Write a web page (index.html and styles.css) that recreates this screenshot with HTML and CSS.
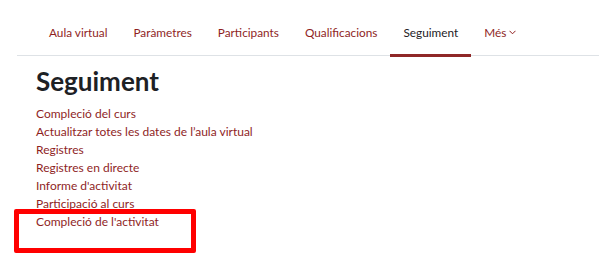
FILE: index.html
```html
<!DOCTYPE html>
<html lang="ca">
<head>
    <meta charset="UTF-8">
    <meta name="viewport" content="width=device-width, initial-scale=1.0">
    <title>Seguiment</title>
    <link rel="stylesheet" href="styles.css">
</head>
<body>
    <div class="page">
        <nav class="course-nav">
            <ul class="nav-list">
                <li><a href="#" class="nav-link">Aula virtual</a></li>
                <li><a href="#" class="nav-link">Paràmetres</a></li>
                <li><a href="#" class="nav-link">Participants</a></li>
                <li><a href="#" class="nav-link">Qualificacions</a></li>
                <li><a href="#" class="nav-link active">Seguiment</a></li>
                <li>
                    <a href="#" class="nav-link">Més
                        <svg class="caret" width="7" height="5" viewBox="0 0 7 5"><path d="M0.5 0.8 L3.5 3.8 L6.5 0.8" fill="none" stroke="currentColor" stroke-width="1"/></svg>
                    </a>
                </li>
            </ul>
        </nav>

        <main class="content">
            <h1>Seguiment</h1>
            <ul class="report-list">
                <li><a href="#">Compleció del curs</a></li>
                <li><a href="#">Actualitzar totes les dates de l’aula virtual</a></li>
                <li><a href="#">Registres</a></li>
                <li><a href="#">Registres en directe</a></li>
                <li><a href="#">Informe d'activitat</a></li>
                <li><a href="#">Participació al curs</a></li>
                <li class="marked"><a href="#">Compleció de l'activitat</a></li>
            </ul>
        </main>
    </div>
</body>
</html>
```

FILE: styles.css
```css
body {
    margin: 0;
    font-family: "Lato", "Noto Sans", sans-serif;
    font-size: 12px;
    color: #1d2125;
    background: #fff;
}
.page {
    padding-left: 17px;
    min-height: 276px;
}
.course-nav {
    border-bottom: 1px solid #dee2e6;
    padding-left: 19px;
}
.nav-list {
    display: flex;
    list-style: none;
    margin: 0;
    padding: 14px 0 0;
}
.nav-link {
    display: flex;
    align-items: center;
    gap: 3px;
    height: 43px;
    padding: 0 13px 4px;
    border-bottom: 3px solid transparent;
    margin-bottom: -2px;
    box-sizing: border-box;
    font-size: 11.8px;
    color: #8f1f1f;
    text-decoration: none;
}
.nav-link.active {
    color: #1d2125;
    border-bottom-color: #8f2828;
}
.caret {
    margin-top: 1px;
}
.content {
    padding: 9px 19px 40px;
}
h1 {
    margin: 0 0 8px;
    font-size: 26px;
    font-weight: 700;
    line-height: 32px;
}
.report-list {
    list-style: none;
    margin: 0;
    padding: 0;
    line-height: 18px;
}
.report-list a {
    color: #8f1f1f;
    text-decoration: none;
}
.marked {
    position: relative;
}
.marked::after {
    content: "";
    position: absolute;
    left: -22px;
    top: -4px;
    width: 172px;
    height: 34px;
    border: 5px solid #ff0000;
    border-radius: 2px;
}
```
